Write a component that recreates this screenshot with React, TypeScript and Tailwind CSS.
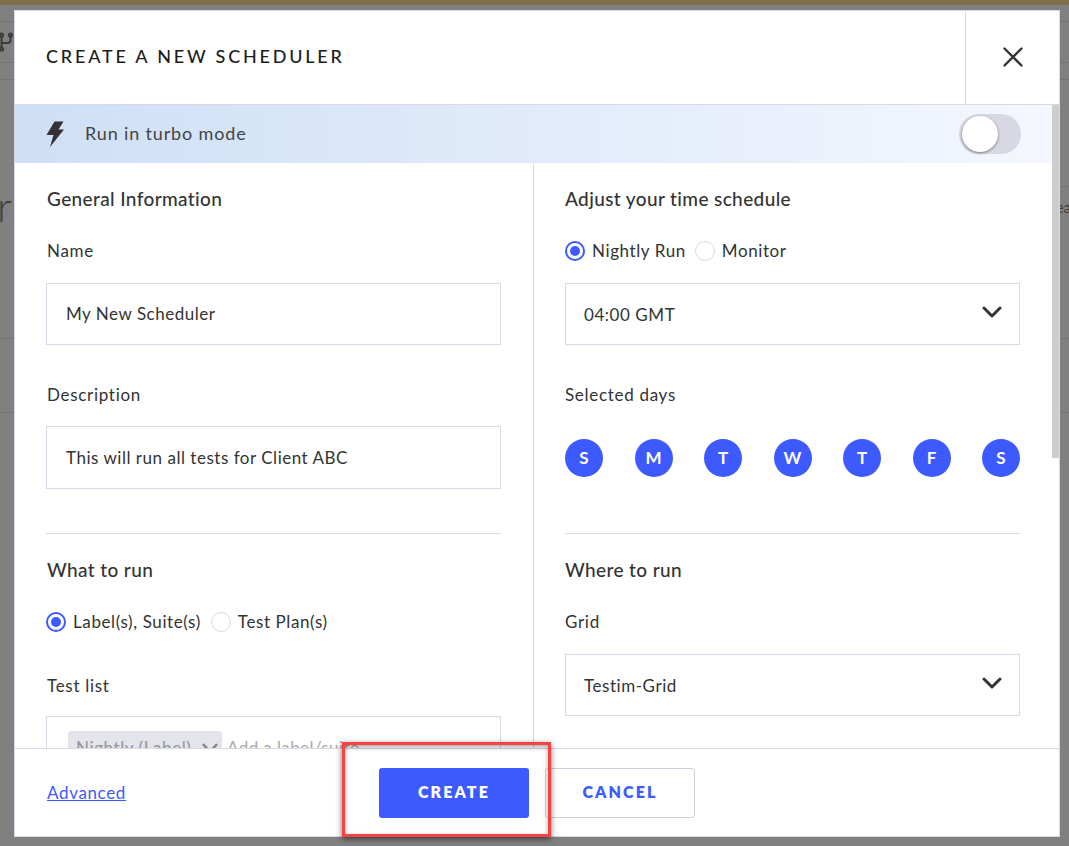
import React from "react";

const font = { fontFamily: '"Lato", "Noto Sans", sans-serif' };

function Radio({ on, label }: { on?: boolean; label: string }) {
  return (
    <div className="flex items-center gap-[6px]">
      <span
        className={
          on
            ? "w-5 h-5 rounded-full border-2 border-[#3d5afe] flex items-center justify-center bg-white"
            : "w-5 h-5 rounded-full border border-[#d8d8e6] bg-white"
        }
      >
        {on ? <span className="block w-[10px] h-[10px] rounded-full bg-[#3d5afe]" /> : null}
      </span>
      <span className="text-[17px] leading-5 text-[#333] tracking-[0.6px] ml-[1px]">{label}</span>
    </div>
  );
}

function Heading({ children }: { children: React.ReactNode }) {
  return <h3 className="text-[19px] leading-6 font-medium text-[#333] tracking-[0.38px]">{children}</h3>;
}

function Label({ children }: { children: React.ReactNode }) {
  return <div className="text-[17px] leading-6 text-[#333] tracking-[0.7px]">{children}</div>;
}

function Field({ value, h = "h-[62px]" }: { value: string; h?: string }) {
  return (
    <div className={`${h} border border-[#d8d8e6] flex items-center px-[19px] text-[17px] text-[#333] tracking-[0.52px]`}>
      {value}
    </div>
  );
}

function Select({ value }: { value: string }) {
  return (
    <div className="h-[62px] border border-[#d8d8e6] flex items-center justify-between pl-[18px] pr-[17px] text-[17px] text-[#333] tracking-[0.55px]">
      <span className="mt-[1px]">{value}</span>
      <svg width="20" height="12" viewBox="0 0 20 12" className="mb-[5px]" fill="none" stroke="#333" strokeWidth="3" strokeLinecap="round" strokeLinejoin="round">
        <path d="M2 2l8 8 8-8" />
      </svg>
    </div>
  );
}

export default function App() {
  const days = ["S", "M", "T", "W", "T", "F", "S"];
  return (
    <div className="relative w-[1069px] h-[846px] overflow-hidden bg-[#808080]" style={font}>
      {/* dimmed page behind the dialog */}
      <div className="h-[5px] bg-[#7f704a]" />
      <div className="h-[17px] border-b border-[#747474]" />
      <div className="h-[41px] border-b border-[#747474] flex items-center justify-start">
        <svg width="14" height="22" viewBox="0 0 14 22" fill="none" stroke="#3a3a3a" strokeWidth="2">
          <circle cx="1.5" cy="4" r="1.6" />
          <circle cx="1.5" cy="18" r="1.6" />
          <circle cx="10.5" cy="4" r="1.6" />
          <path d="M1.5 5v12M1.5 12h6a3 3 0 0 0 3-3V5" />
        </svg>
      </div>
      <div className="h-[17px] border-b border-[#747474]" />
      <div className="h-[259px] border-b border-[#747474] flex justify-between items-center text-[#3f3f3f]">
        <span className="text-[42px] leading-none font-light -ml-[3px] mb-[6px]">r</span>
        <span className="text-[15px] -mr-[2px] mb-[4px]">ea</span>
      </div>
      <div className="h-[74px] border-b border-[#747474]" />
      <div className="absolute right-0 top-[186px] w-[9px] h-px bg-[#747474]" />

      {/* dialog */}
      <div className="absolute left-[14px] top-[10px] w-[1046px] h-[827px] bg-white border border-[#d8d8e6] flex flex-col">
        <header className="h-[94px] shrink-0 border-b border-[#d8d8e6] flex">
          <div className="flex-1 flex items-center pl-[31px] pb-[2px] text-[18px] font-medium tracking-[2.8px] text-[#1c1c1c]">
            CREATE A NEW SCHEDULER
          </div>
          <div className="w-[94px] border-l border-[#d8d8e6] flex items-center justify-center pb-[1px]">
            <svg width="20" height="20" viewBox="0 0 20 20" fill="none" stroke="#333" strokeWidth="2.4" strokeLinecap="round">
              <path d="M1.5 1.5l17 17M18.5 1.5l-17 17" />
            </svg>
          </div>
        </header>

        <div className="flex-1 min-h-0 flex overflow-hidden">
          <div className="flex-1 min-w-0 flex flex-col">
            <div className="h-[58px] shrink-0 bg-gradient-to-r from-[#cedff6] to-[#f4f7fe] flex items-center justify-between pl-[31px] pr-[31px]">
              <div className="flex items-center gap-[21px]">
                <svg width="18" height="26" viewBox="0 0 18 26" fill="#333">
                  <path d="M8.5 0.5H17.5L12.5 8.5H18L4 26L7.5 14H0.5Z" />
                </svg>
                <span className="text-[18px] text-[#444] tracking-[0.85px] mb-[1px]">Run in turbo mode</span>
              </div>
              <div className="relative w-[62px] h-10 rounded-full bg-[#d8d8e4]">
                <span className="absolute left-[3px] top-[2px] w-9 h-9 rounded-full bg-white shadow-[0_1px_3px_rgba(0,0,0,0.45)]" />
              </div>
            </div>

            <div className="flex-1 min-h-0 flex overflow-hidden">
              <section className="w-[519px] shrink-0 pl-[31px] pr-[32px] border-r border-[#d8d8e6]">
                <div className="pt-[24px] pl-[1px]"><Heading>General Information</Heading></div>
                <div className="mt-[28px] pl-[1px]"><Label>Name</Label></div>
                <div className="mt-[20px]"><Field value="My New Scheduler" /></div>
                <div className="mt-[38px] pl-[1px]"><Label>Description</Label></div>
                <div className="mt-[19px]"><Field value="This will run all tests for Client ABC" h="h-[63px]" /></div>
                <div className="mt-[44px] border-t border-[#d8d8e6]" />
                <div className="mt-[24px] pl-[1px]"><Heading>What to run</Heading></div>
                <div className="mt-[30px] flex gap-[10px]">
                  <Radio on label="Label(s), Suite(s)" />
                  <Radio label="Test Plan(s)" />
                </div>
                <div className="mt-[42px] pl-[1px]"><Label>Test list</Label></div>
                <div className="mt-[18px] h-[62px] border border-[#d8d8e6] pl-[21px] pt-[14px] flex items-start gap-[5px] text-[17px] text-[#aaa]">
                  <span className="w-[154px] h-[34px] rounded-[3px] bg-[#e4e4ec] flex items-center justify-between pl-[8px] pr-[4px] text-[#999] font-medium tracking-[0.55px]">
                    Nightly (Label)
                    <svg width="16" height="11" viewBox="0 0 16 11" fill="none" stroke="#888" strokeWidth="2.6"><path d="M1 1l7 8 7-8" /></svg>
                  </span>
                  <span className="leading-[34px] tracking-[0.4px]">Add a label/suite</span>
                </div>
              </section>

              <section className="flex-1 pl-[31px] pr-[32px]">
                <div className="pt-[24px]"><Heading>Adjust your time schedule</Heading></div>
                <div className="mt-[30px] flex gap-[9px]">
                  <Radio on label="Nightly Run" />
                  <Radio label="Monitor" />
                </div>
                <div className="mt-[22px]"><Select value="04:00 GMT" /></div>
                <div className="mt-[38px]"><Label>Selected days</Label></div>
                <div className="mt-[32px] flex justify-between">
                  {days.map((d, i) => (
                    <span key={i} className="w-[38px] h-[38px] rounded-full bg-[#3d5afe] text-white flex items-center justify-center text-[17px] font-bold">
                      {d}
                    </span>
                  ))}
                </div>
                <div className="mt-[56px] border-t border-[#d8d8e6]" />
                <div className="mt-[24px]"><Heading>Where to run</Heading></div>
                <div className="mt-[28px]"><Label>Grid</Label></div>
                <div className="mt-[20px]"><Select value="Testim-Grid" /></div>
              </section>
            </div>
          </div>
          <div className="w-[7px] shrink-0 bg-white">
            <div className="h-[353px] bg-[#cdcdcd]" />
          </div>
        </div>

        <footer className="h-[88px] shrink-0 border-t border-[#d8d8e6] grid grid-cols-[1fr_auto_1fr] items-center px-[32px]">
          <a className="text-[17px] text-[#3d5afe] underline tracking-[0.65px] mt-[1px]">Advanced</a>
          <div className="flex gap-4">
            <button className="w-[150px] h-[50px] pb-[2px] rounded-[3px] bg-[#3d5afe] text-white text-[16px] font-extrabold tracking-[2.1px]">CREATE</button>
            <button className="w-[150px] h-[50px] pb-[2px] rounded-[3px] bg-white border border-[#d0d0dc] text-[#3d5afe] text-[16px] font-extrabold tracking-[2.1px]">CANCEL</button>
          </div>
          <div />
        </footer>
      </div>

      {/* annotation */}
      <div className="absolute left-[342px] top-[742px] w-[209px] h-[95px] border-[3px] border-[#fb4143] shadow-[0_2px_6px_rgba(0,0,0,0.55),inset_0_2px_5px_rgba(0,0,0,0.35)] pointer-events-none" />
    </div>
  );
}
